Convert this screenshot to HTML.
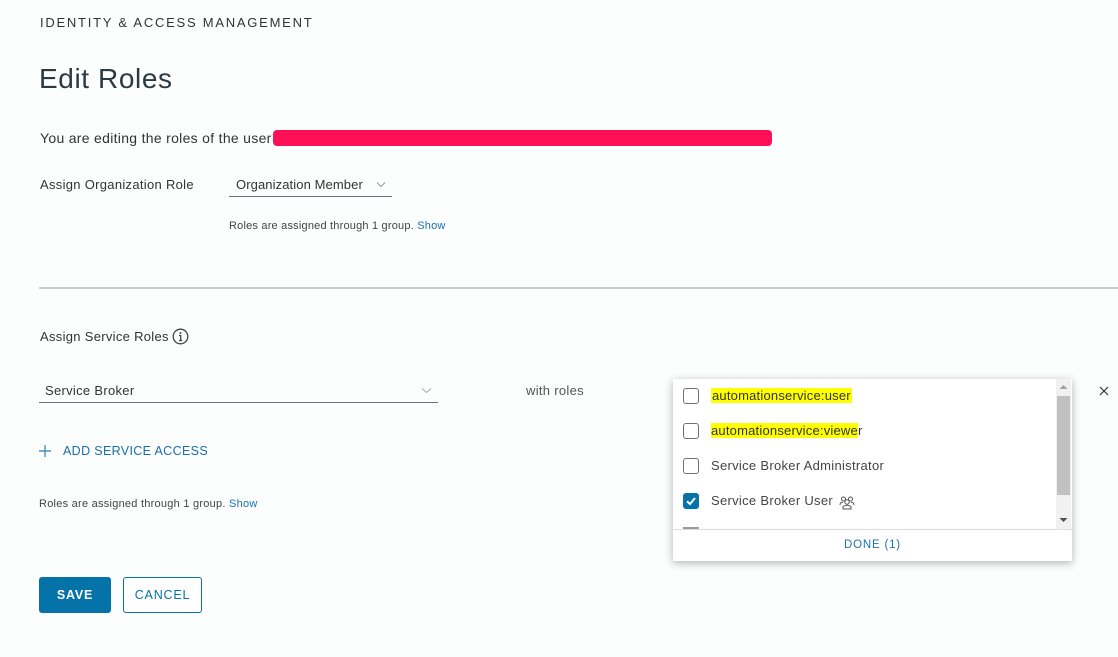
<!DOCTYPE html>
<html><head><meta charset="utf-8"><style>
*{margin:0;padding:0;box-sizing:border-box}
body{width:1118px;height:657px;overflow:hidden;background:#fcfdfd;font-family:"Liberation Sans",sans-serif;color:#313131;position:relative}
.a{position:absolute;white-space:nowrap}
</style></head><body>
<div class="a" style="left:40px;top:15px;font-size:13px;letter-spacing:1.75px;color:#333">IDENTITY &amp; ACCESS MANAGEMENT</div>
<div class="a" style="left:39px;top:63px;font-size:28px;letter-spacing:0.6px;color:#2b3a42">Edit Roles</div>
<div class="a" style="left:40px;top:130px;font-size:14px;letter-spacing:0.3px;color:#333">You are editing the roles of the user</div>
<div class="a" style="left:273px;top:130px;width:499px;height:16px;background:#ff0f55;border-radius:4px"></div>

<div class="a" style="left:40px;top:177px;font-size:13px;letter-spacing:0.3px;color:#333">Assign Organization Role</div>
<div class="a" style="left:229px;top:176px;width:163px;height:21px;border-bottom:1px solid #6b707a"></div>
<div class="a" style="left:236px;top:177px;font-size:13px;letter-spacing:0.1px;color:#333">Organization Member</div>
<svg class="a" style="left:376px;top:181px" width="10" height="7"><path d="M1 1.5L5 5.5L9 1.5" fill="none" stroke="#999" stroke-width="1"/></svg>
<div class="a" style="left:229px;top:220px;font-size:11px;letter-spacing:0.2px;color:#444">Roles are assigned through 1 group. <span style="color:#1a73b4">Show</span></div>

<div class="a" style="left:39px;top:287px;width:1079px;height:2px;background:#ccc"></div>

<div class="a" style="left:40px;top:329px;font-size:13px;letter-spacing:0.3px;color:#333">Assign Service Roles</div>
<svg class="a" style="left:172px;top:328px" width="17" height="17"><circle cx="8.5" cy="8.5" r="7.3" fill="none" stroke="#444" stroke-width="1.3"/><circle cx="8.5" cy="5" r="1" fill="#444"/><path d="M7 7.5H8.7V12.5M7 12.5H10.3" fill="none" stroke="#444" stroke-width="1.3"/></svg>

<div class="a" style="left:39px;top:382px;width:399px;height:21px;border-bottom:1px solid #6b707a"></div>
<div class="a" style="left:45px;top:383px;font-size:13px;letter-spacing:0.3px;color:#333">Service Broker</div>
<svg class="a" style="left:421px;top:387px" width="11" height="7"><path d="M1 1.5L5.5 5.5L10 1.5" fill="none" stroke="#aaa" stroke-width="1"/></svg>
<div class="a" style="left:526px;top:383px;font-size:13px;letter-spacing:0.3px;color:#555">with roles</div>

<svg class="a" style="left:38px;top:444px" width="14" height="14"><path d="M7 1V13M1 7H13" stroke="#4b8fc0" stroke-width="1.4"/></svg>
<div class="a" style="left:63px;top:444px;font-size:12.5px;letter-spacing:0.35px;color:#1a6fa6">ADD SERVICE ACCESS</div>
<div class="a" style="left:39px;top:498px;font-size:11px;letter-spacing:0.25px;color:#444">Roles are assigned through 1 group. <span style="color:#1a73b4">Show</span></div>

<div class="a" style="left:39px;top:577px;width:72px;height:36px;background:#0572a8;border-radius:3px;color:#fff;font-size:12.5px;font-weight:bold;letter-spacing:.8px;text-align:center;line-height:36px">SAVE</div>
<div class="a" style="left:123px;top:577px;width:79px;height:36px;border:1px solid #0572a8;border-radius:3px;color:#0572a8;font-size:12.5px;letter-spacing:.8px;text-align:center;line-height:34px;background:#fff">CANCEL</div>

<div class="a" style="left:673px;top:379px;width:399px;height:182px;background:#fff;box-shadow:0 2px 8px rgba(0,0,0,.3)">
  <div class="a" style="left:383px;top:0;width:15px;height:150px;background:#f1f1f1"></div>
  <div class="a" style="left:384px;top:17px;width:13px;height:99px;background:#c1c1c1"></div>
  <svg class="a" style="left:386px;top:5px" width="9" height="6"><path d="M0.5 5L4.5 1L8.5 5Z" fill="#a3a3a3"/></svg>
  <svg class="a" style="left:386px;top:138px" width="9" height="6"><path d="M0.5 1L4.5 5L8.5 1Z" fill="#505050"/></svg>
  <div class="a" style="left:10px;top:9px;width:16px;height:16px;border:1px solid #6b707a;border-radius:3px"></div>
  <div class="a" style="left:38px;top:9px;font-size:13px;letter-spacing:0.2px;background:#ffff00;color:#333;padding:0 1px">automationservice:user</div>
  <div class="a" style="left:10px;top:44px;width:16px;height:16px;border:1px solid #6b707a;border-radius:3px"></div>
  <div class="a" style="left:38px;top:44px;font-size:13px;letter-spacing:0.2px;color:#333"><span style="background:#ffff00">automationservice:viewe</span>r</div>
  <div class="a" style="left:10px;top:79px;width:16px;height:16px;border:1px solid #6b707a;border-radius:3px"></div>
  <div class="a" style="left:38px;top:79px;font-size:13px;letter-spacing:0.3px;color:#444">Service Broker Administrator</div>
  <div class="a" style="left:10px;top:114px;width:16px;height:16px;background:#0572a8;border-radius:3px"></div>
  <svg class="a" style="left:10px;top:114px" width="16" height="16"><path d="M4 8.3L7 11L12 5" fill="none" stroke="#fff" stroke-width="2"/></svg>
  <div class="a" style="left:38px;top:114px;font-size:13px;letter-spacing:0.3px;color:#444">Service Broker User</div>
  <svg class="a" style="left:166px;top:115px" width="16" height="16"><circle cx="4.5" cy="5" r="2" fill="none" stroke="#555"/><circle cx="11.5" cy="5" r="2" fill="none" stroke="#555"/><circle cx="8" cy="8" r="2.2" fill="none" stroke="#555"/><path d="M4 15V12.5Q8 10 12 12.5V15ZM1 11Q1 8 4 8.5M15 11Q15 8 12 8.5" fill="none" stroke="#555"/></svg>
  <div class="a" style="left:10px;top:148px;width:16px;height:2px;background:#999"></div>
  <div class="a" style="left:0;top:150px;width:399px;height:32px;border-top:1px solid #ddd;background:#fff;text-align:center;line-height:31px;font-size:11.5px;letter-spacing:.8px;color:#1a73b4">DONE (1)</div>
</div>
<svg class="a" style="left:1099px;top:386px" width="10" height="10"><path d="M1 1L9 9M9 1L1 9" stroke="#333" stroke-width="1.2"/></svg>
</body></html>
